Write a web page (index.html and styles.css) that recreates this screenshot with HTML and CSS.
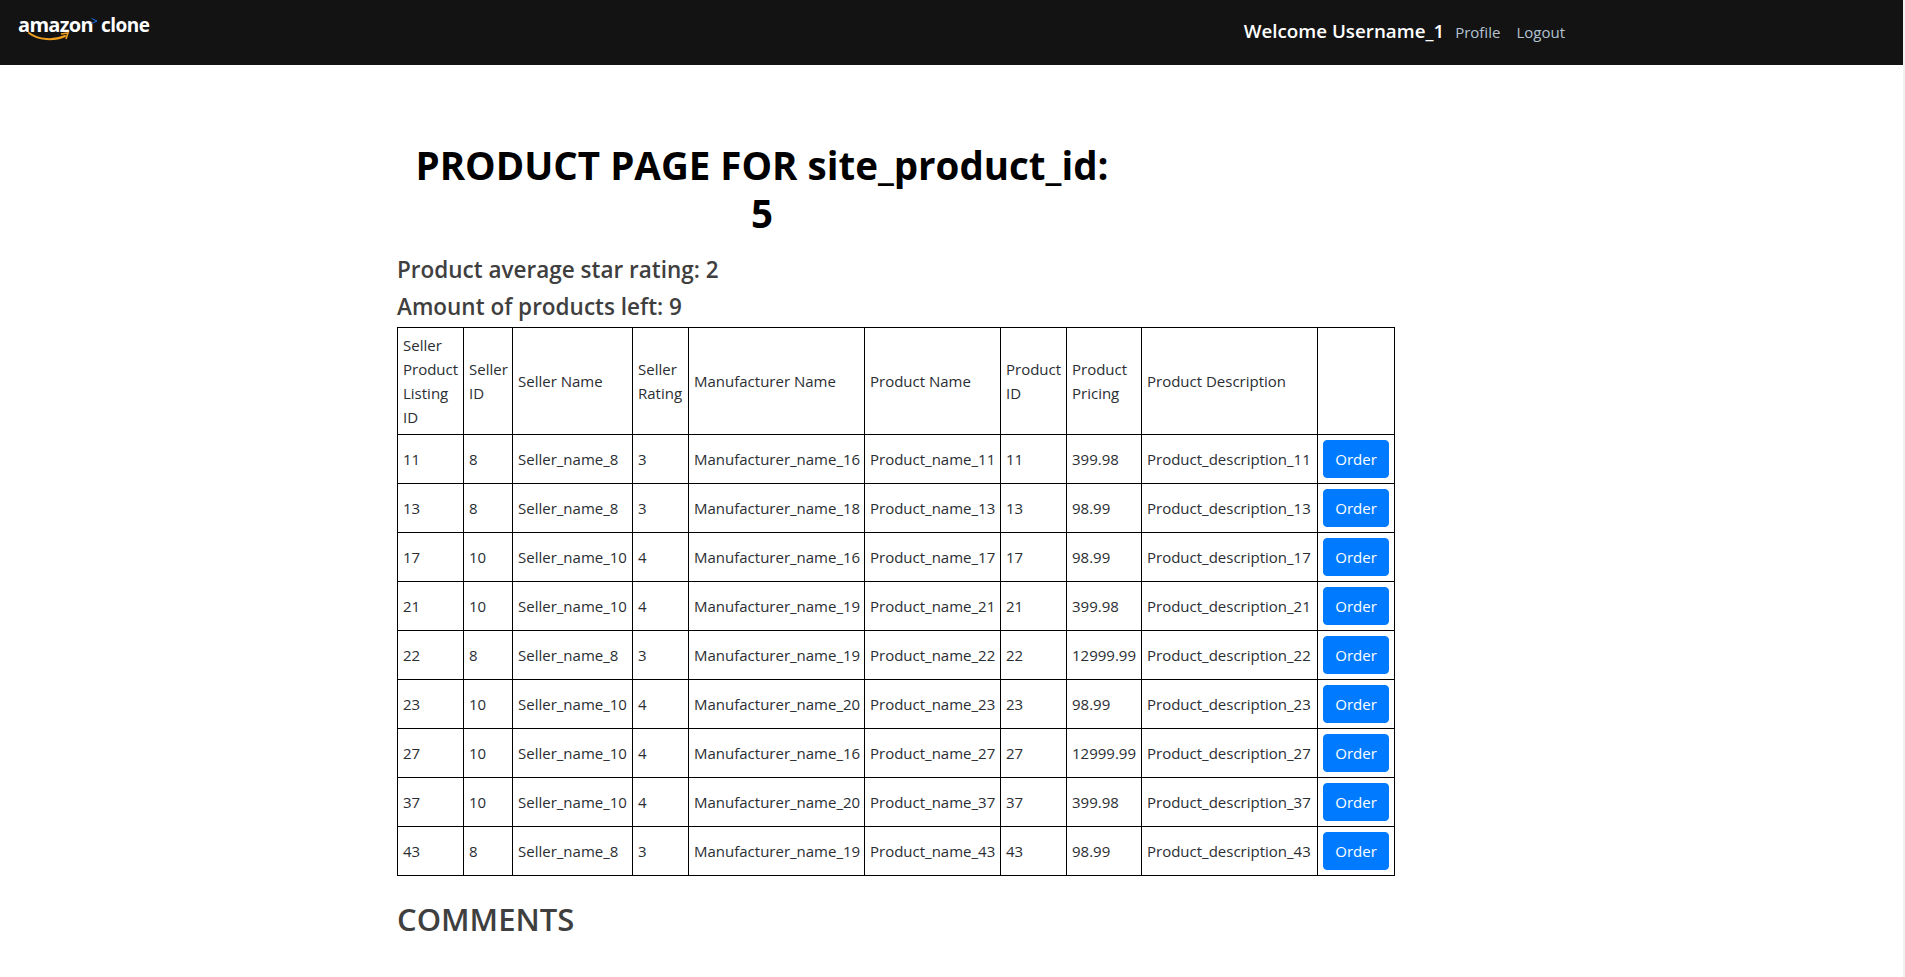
FILE: index.html
```html
<!DOCTYPE html>
<html lang="en">
<head>
    <meta charset="UTF-8">
    <meta name="viewport" content="width=device-width, initial-scale=1.0">
    <title>Product Page</title>
    <link rel="stylesheet" href="styles.css">
</head>
<body>
    <nav class="navbar">
        <a class="logo" href="#">
            <span class="logo-amazon">amazon</span>
            <svg class="logo-arrow" width="7" height="6" viewBox="0 0 7 6"><path d="M0.5 0.5 L6 3 L0.5 5.5" fill="none" stroke="#1a73e8" stroke-width="1"/></svg>
            <span class="logo-clone">clone</span>
            <svg class="logo-smile" width="42" height="11" viewBox="0 0 42 11"><path d="M1 1 C10 8 26 9 37 4" fill="none" stroke="#f0a020" stroke-width="2" stroke-linecap="round"/><path d="M33 2 L40 1 L38 7" fill="none" stroke="#f0a020" stroke-width="1.6"/></svg>
        </a>
        <div class="nav-right">
            <span class="welcome">Welcome Username_1</span>
            <a class="nav-link" href="#">Profile</a>
            <a class="nav-link" href="#">Logout</a>
        </div>
    </nav>

    <main class="content">
        <h1 class="page-title">PRODUCT PAGE FOR site_product_id: 5</h1>
        <h4 class="info">Product average star rating: 2</h4>
        <h4 class="info">Amount of products left: 9</h4>

        <table class="products">
            <colgroup>
                <col class="c-listing">
                <col class="c-seller">
                <col class="c-sname">
                <col class="c-rating">
                <col class="c-manu">
                <col class="c-pname">
                <col class="c-pid">
                <col class="c-price">
                <col class="c-desc">
                <col class="c-order">
            </colgroup>
            <thead>
                <tr>
                    <th>Seller Product Listing ID</th>
                    <th>Seller ID</th>
                    <th>Seller Name</th>
                    <th>Seller Rating</th>
                    <th>Manufacturer Name</th>
                    <th>Product Name</th>
                    <th>Product ID</th>
                    <th>Product Pricing</th>
                    <th>Product Description</th>
                    <th></th>
                </tr>
            </thead>
            <tbody>
                <tr><td>11</td><td>8</td><td>Seller_name_8</td><td>3</td><td>Manufacturer_name_16</td><td>Product_name_11</td><td>11</td><td>399.98</td><td>Product_description_11</td><td><button class="btn">Order</button></td></tr>
                <tr><td>13</td><td>8</td><td>Seller_name_8</td><td>3</td><td>Manufacturer_name_18</td><td>Product_name_13</td><td>13</td><td>98.99</td><td>Product_description_13</td><td><button class="btn">Order</button></td></tr>
                <tr><td>17</td><td>10</td><td>Seller_name_10</td><td>4</td><td>Manufacturer_name_16</td><td>Product_name_17</td><td>17</td><td>98.99</td><td>Product_description_17</td><td><button class="btn">Order</button></td></tr>
                <tr><td>21</td><td>10</td><td>Seller_name_10</td><td>4</td><td>Manufacturer_name_19</td><td>Product_name_21</td><td>21</td><td>399.98</td><td>Product_description_21</td><td><button class="btn">Order</button></td></tr>
                <tr><td>22</td><td>8</td><td>Seller_name_8</td><td>3</td><td>Manufacturer_name_19</td><td>Product_name_22</td><td>22</td><td>12999.99</td><td>Product_description_22</td><td><button class="btn">Order</button></td></tr>
                <tr><td>23</td><td>10</td><td>Seller_name_10</td><td>4</td><td>Manufacturer_name_20</td><td>Product_name_23</td><td>23</td><td>98.99</td><td>Product_description_23</td><td><button class="btn">Order</button></td></tr>
                <tr><td>27</td><td>10</td><td>Seller_name_10</td><td>4</td><td>Manufacturer_name_16</td><td>Product_name_27</td><td>27</td><td>12999.99</td><td>Product_description_27</td><td><button class="btn">Order</button></td></tr>
                <tr><td>37</td><td>10</td><td>Seller_name_10</td><td>4</td><td>Manufacturer_name_20</td><td>Product_name_37</td><td>37</td><td>399.98</td><td>Product_description_37</td><td><button class="btn">Order</button></td></tr>
                <tr><td>43</td><td>8</td><td>Seller_name_8</td><td>3</td><td>Manufacturer_name_19</td><td>Product_name_43</td><td>43</td><td>98.99</td><td>Product_description_43</td><td><button class="btn">Order</button></td></tr>
            </tbody>
        </table>

        <h2 class="comments">COMMENTS</h2>
    </main>
</body>
</html>
```

FILE: styles.css
```css
html {
    background-color: #f1f1f1;
}
body {
    margin: 0 2px 0 0;
    min-height: 977px;
    background-color: #fff;
    font-family: "Open Sans", "Noto Sans", sans-serif;
    font-size: 15px;
    line-height: 24px;
    color: #2a2e33;
}
.navbar {
    display: flex;
    height: 65px;
    background-color: #131313;
}
.logo {
    position: relative;
    display: flex;
    align-items: baseline;
    height: 40px;
    margin-left: 18px;
    color: #fff;
    text-decoration: none;
    font-weight: 700;
    line-height: 1;
}
.logo-amazon {
    margin-top: 15px;
    font-size: 20px;
    letter-spacing: -0.7px;
}
.logo-arrow {
    align-self: flex-start;
    margin: 18px 3px 0 -2px;
}
.logo-clone {
    font-size: 19px;
    letter-spacing: -0.5px;
}
.logo-smile {
    position: absolute;
    left: 10px;
    top: 32px;
}
.nav-right {
    display: flex;
    align-items: baseline;
    margin-left: auto;
    margin-right: 338px;
    padding-top: 19px;
}
.welcome {
    margin-right: 7px;
    color: #fff;
    font-size: 18.8px;
    font-weight: 600;
}
.nav-link {
    margin-left: 4px;
    margin-right: 12px;
    color: #b4c3d2;
    text-decoration: none;
}
.nav-link:last-child {
    margin-right: 0;
}
.content {
    margin-left: 397px;
    width: 998px;
}
.page-title {
    width: 700px;
    margin: 76px 0 18px 15px;
    color: #000;
    font-size: 38.5px;
    font-weight: 700;
    line-height: 48px;
    text-align: center;
}
.info {
    margin: 0 0 8px;
    color: #3f3f3f;
    font-size: 22.5px;
    font-weight: 600;
    line-height: 29px;
}
.products {
    width: 998px;
    margin-top: -2px;
    border-collapse: collapse;
    table-layout: fixed;
}
.products th,
.products td {
    padding: 5px;
    border: 1px solid #000;
    font-weight: 400;
    text-align: left;
    vertical-align: middle;
}
.products td {
    white-space: nowrap;
}
.c-listing { width: 66px; }
.c-seller { width: 49px; }
.c-sname { width: 120px; }
.c-rating { width: 56px; }
.c-manu { width: 176px; }
.c-pname { width: 136px; }
.c-pid { width: 66px; }
.c-price { width: 75px; }
.c-desc { width: 176px; }
.c-order { width: 77px; }
.btn {
    display: block;
    width: 66px;
    height: 38px;
    padding: 0;
    border: 1px solid #007bff;
    border-radius: 4px;
    background-color: #007bff;
    color: #fff;
    font-family: inherit;
    font-size: 15px;
}
.comments {
    margin: 24px 0 0;
    color: #3f3f3f;
    font-size: 31px;
    font-weight: 600;
    line-height: 38px;
}
```
